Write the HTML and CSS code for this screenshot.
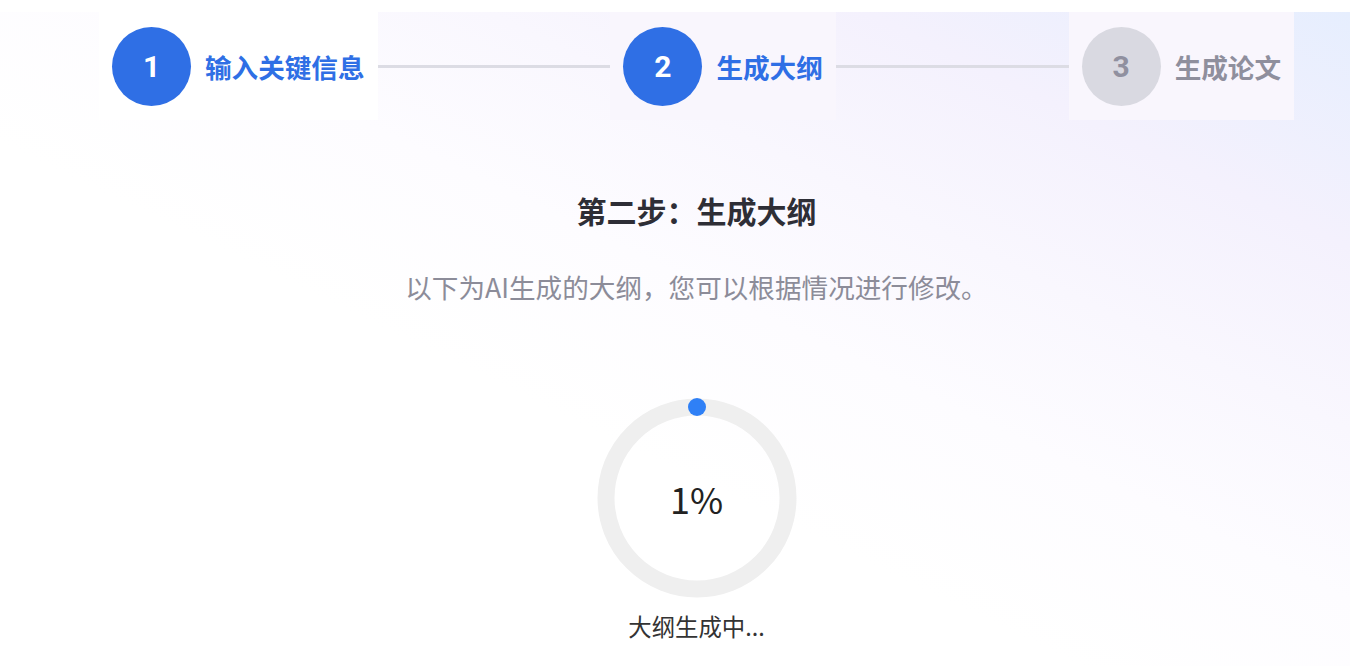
FILE: index.html
```html
<!DOCTYPE html>
<html lang="zh-CN">
<head>
<meta charset="utf-8">
<title>生成大纲</title>
<link rel="stylesheet" href="styles.css">
</head>
<body>
<div class="panel">
  <div class="content">
    <div class="steps">
      <div class="step step-done">
        <div class="num">1</div>
        <div class="label">输入关键信息</div>
      </div>
      <div class="line"></div>
      <div class="step step-active">
        <div class="num">2</div>
        <div class="label">生成大纲</div>
      </div>
      <div class="line"></div>
      <div class="step step-todo">
        <div class="num">3</div>
        <div class="label">生成论文</div>
      </div>
    </div>
    <h1 class="title">第二步：生成大纲</h1>
    <p class="subtitle">以下为AI生成的大纲，您可以根据情况进行修改。</p>
    <div class="progress">
      <div class="ring">
        <svg width="200" height="200" viewBox="0 0 200 200">
          <circle cx="100" cy="100" r="91" fill="none" stroke="#efefef" stroke-width="17"/>
          <circle cx="100" cy="9" r="9" fill="#2f80f6"/>
        </svg>
        <div class="percent">1%</div>
      </div>
      <div class="status">大纲生成中...</div>
    </div>
  </div>
</div>
</body>
</html>
```

FILE: styles.css
```css
html, body {
  margin: 0;
  padding: 0;
  background: #ffffff;
}
body {
  font-family: "Noto Sans CJK SC", "Noto Sans", sans-serif;
  overflow: hidden;
}
.panel {
  margin-top: 12px;
  height: 654px;
  background: linear-gradient(to bottom left, #e6eefe 0%, #f4f1fd 18%, #f9f7fe 32%, #fdfcff 45%, #ffffff 60%);
}
.content {
  padding: 0 56px 0 99px;
  display: flex;
  flex-direction: column;
  align-items: center;
}
.steps {
  align-self: stretch;
  display: flex;
  align-items: center;
}
.step {
  display: flex;
  align-items: center;
  padding: 15px 13px 14px 13px;
  background: #f9f6fd;
}
.step-done {
  background: #ffffff;
}
.num {
  width: 79px;
  height: 79px;
  border-radius: 50%;
  display: flex;
  align-items: center;
  justify-content: center;
  font-family: Roboto, "Noto Sans", sans-serif;
  font-weight: 700;
  font-size: 30px;
  color: #ffffff;
  background: #2f6fe5;
}
.label {
  margin-left: 14px;
  font-size: 26.6px;
  font-weight: 700;
  color: #2f6fe5;
  line-height: 36px;
}
.step-todo .num {
  background: #d9d9e1;
  color: #90909f;
}
.step-todo .label {
  color: #8f8f9d;
}
.line {
  flex: 1;
  height: 3px;
  background: #dcdce4;
}
.title {
  margin: 70px 0 0;
  font-size: 30px;
  line-height: 40px;
  font-weight: 700;
  color: #2e2e36;
}
.subtitle {
  margin: 39px 0 0;
  font-size: 26.6px;
  line-height: 36px;
  color: #8c8c99;
}
.progress {
  margin-top: 93px;
  display: flex;
  flex-direction: column;
  align-items: center;
}
.ring {
  position: relative;
  width: 200px;
  height: 200px;
}
.ring svg {
  display: block;
}
.percent {
  position: absolute;
  inset: 0;
  display: flex;
  align-items: center;
  justify-content: center;
  font-size: 36px;
  color: #222222;
}
.status {
  margin-top: 13px;
  font-size: 23.4px;
  line-height: 30px;
  color: #333333;
}
```
